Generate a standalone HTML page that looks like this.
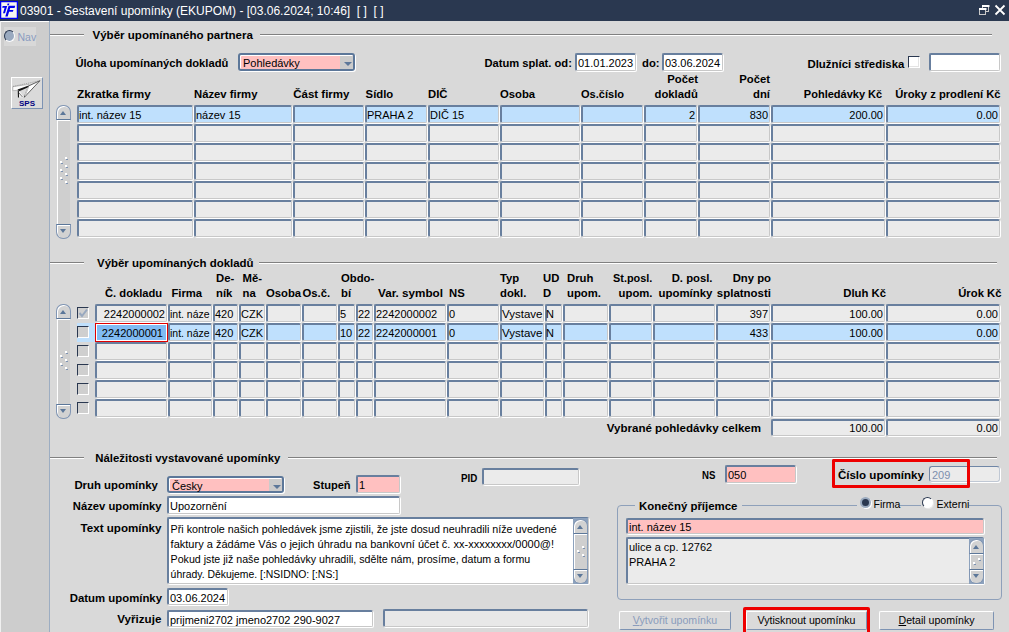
<!DOCTYPE html>
<html><head><meta charset="utf-8"><style>
html,body{margin:0;padding:0;width:1009px;height:632px;overflow:hidden;background:#d9d9d9}
body{position:relative;font-family:"Liberation Sans",sans-serif}
.t{position:absolute;line-height:1;white-space:nowrap;font-family:"Liberation Sans",sans-serif}
.b{position:absolute}
.f{position:absolute;box-sizing:border-box;border-style:solid;border-width:2px 2px 1px 2px;border-color:#5e7797 #ffffff #ffffff #5e7797;box-shadow:inset -1px -1px 0 #cfcfcf}
.sf{position:absolute;box-sizing:border-box;border-style:solid;border-width:2px 1px 1px 2px;border-color:#687f9e #c8c8c8 #c8c8c8 #687f9e;border-radius:2px;box-shadow:1px 1px 0 #ffffff}
svg.b{position:absolute}
</style></head><body>
<div class="b" style="left:0px;top:0px;width:1009px;height:21px;background:#2a3850"></div>
<svg class="b" style="left:0px;top:1px" width="18" height="18" viewBox="0 0 18 18">
<rect x="0.6" y="0.6" width="16.8" height="16.8" fill="#f7f7ee" stroke="#0000f0" stroke-width="1.3"/>
<path d="M7.6 2.6 h1.8 l-0.5 1.6 h-1.8 z" fill="#0000f0"/>
<path d="M2.6 5 h4.6 l-2.2 7.3 h-2 l1.6 -5.6 h-2.4 z" fill="#0000f0"/>
<path d="M8.6 4.8 h6.6 l-0.6 2.1 h-4.4 l-0.6 2 h3.8 l-0.5 1.8 h-3.8 l-1.4 4.7 h-2.4 z" fill="#0000f0"/>
</svg>
<div class="t" style="left:20px;top:5.00px;font-size:12px;color:#ffffff;">03901 - Sestavení upomínky (EKUPOM) - [03.06.2024; 10:46]&nbsp; [ ]&nbsp; [ ]</div>
<svg class="b" style="left:975px;top:2px" width="34" height="18" viewBox="975 2 34 18">
<rect x="982.5" y="5.5" width="6" height="6" fill="none" stroke="#c8c8c8" stroke-width="1"/>
<rect x="982" y="5" width="7.5" height="2" fill="#ffffff"/>
<rect x="979.5" y="8.5" width="6" height="6" fill="#2a3850" stroke="#c8c8c8" stroke-width="1"/>
<rect x="979" y="8" width="7.5" height="2" fill="#ffffff"/>
<path d="M995.5 5.5 L1004.5 14.5 M1004.5 5.5 L995.5 14.5" stroke="#ffffff" stroke-width="1.8"/>
</svg>
<div class="b" style="left:0px;top:21px;width:1009px;height:611px;background:#d9d9d9"></div>
<div class="b" style="left:0px;top:21px;width:49px;height:611px;background:#cdcdcd"></div>
<div class="b" style="left:0px;top:21px;width:49px;height:1px;background:#ffffff"></div>
<div class="b" style="left:0px;top:21px;width:1px;height:611px;background:#f0f0f0"></div>
<div class="b" style="left:49px;top:21px;width:1px;height:611px;background:#9cadc2"></div>
<div class="b" style="left:4px;top:27px;width:32px;height:19px;background:#d8d8d8"></div>
<div class="b" style="left:4px;top:30px;width:11px;height:12px;border-radius:50%;background:#9aaac0;box-sizing:border-box;border:1px solid;border-color:#2a3850 #ffffff #ffffff #2a3850"></div>
<div class="t" style="left:17.5px;top:32.00px;font-size:10.5px;color:#8a9cc0;">Nav</div>
<div class="b" style="left:11px;top:77px;width:32px;height:32px;box-sizing:border-box;border:1px solid;border-color:#ffffff #7d93b3 #7d93b3 #ffffff;background:#dadada"></div>
<svg class="b" style="left:0px;top:0px" width="50" height="120" viewBox="0 0 50 120">
<path d="M28.5 86 L39.9 80.7 L24.2 97.4 Z" fill="#ffffff" stroke="#3a3a3a" stroke-width="0.8"/>
<path d="M28 87.5 L25 95.5" fill="none" stroke="#c8c8c8" stroke-width="1.5"/>
<path d="M12.8 86.7 L29 84.3 L28.5 86 L19 90.2 L12.8 90.7 Z" fill="#fbfbfb" stroke="#8a8a8a" stroke-width="0.5"/>
<path d="M17.5 89.6 L28.8 85.4 L27.2 87.8 L19.2 91.2 Z" fill="#151515"/>
<path d="M18.2 90.6 L18.4 97.2 L24.2 97.4 L20.5 92.2 Z" fill="#f0f0f0"/>
<path d="M18.3 90.4 L18.5 97.4" stroke="#111" stroke-width="1.1"/>
<path d="M19 93 L22.5 97" stroke="#333" stroke-width="0.6"/>
<path d="M13 86.4 L39.5 80.8" stroke="#777" stroke-width="0.5" stroke-dasharray="1.3 0.9"/>
</svg>
<div class="t" style="left:-123px;width:300px;top:100.00px;font-size:8px;font-weight:bold;color:#000080;text-align:center;">SPS</div>
<div class="b" style="left:50px;top:34px;width:34px;height:1px;background:#808080"></div>
<div class="b" style="left:50px;top:35px;width:34px;height:1px;background:#ffffff"></div>
<div class="t" style="left:92.5px;top:30.00px;font-size:11.55px;font-weight:bold;color:#000;">Výběr upomínaného partnera</div>
<div class="b" style="left:260px;top:34px;width:732px;height:1px;background:#808080"></div>
<div class="b" style="left:260px;top:35px;width:732px;height:1px;background:#ffffff"></div>
<div class="t" style="left:75.4px;top:58.00px;font-size:11.19px;font-weight:bold;color:#000;">Úloha upomínaných dokladů</div>
<div class="b" style="left:238px;top:53px;width:117px;height:18px;box-sizing:border-box;border:2px solid #5c7799;border-radius:3px;background:#ffc0c0;box-shadow:inset 1px 1px 0 #ffffff, 1px 1px 0 #ffffff"></div>
<div class="b" style="left:340px;top:56px;width:13px;height:13px;background:#cbcbcb"></div>
<div class="b" style="left:344px;top:62px;width:0;height:0;border-left:4px solid transparent;border-right:4px solid transparent;border-top:4px solid #5c7799"></div>
<div class="t" style="left:243px;top:58.00px;font-size:11px;color:#000;">Pohledávky</div>
<div class="t" style="right:437.1148484375px;top:58.00px;font-size:11.18px;font-weight:bold;color:#000;text-align:right;">Datum splat. od:</div>
<div class="sf" style="left:575px;top:53px;width:61px;height:18px;background:#ffffff;"></div>
<div class="t" style="left:578px;top:58.00px;font-size:11px;color:#000;">01.01.2023</div>
<div class="t" style="left:642px;top:58.00px;font-size:11.3px;font-weight:bold;color:#000;">do:</div>
<div class="sf" style="left:662px;top:53px;width:61px;height:18px;background:#ffffff;"></div>
<div class="t" style="left:665px;top:58.00px;font-size:11px;color:#000;">03.06.2024</div>
<div class="t" style="right:104.67926562499997px;top:59.00px;font-size:11.4px;font-weight:bold;color:#000;text-align:right;">Dlužníci střediska</div>
<div class="b" style="left:908px;top:56px;width:12px;height:12px;box-sizing:border-box;border:1px solid;border-color:#2a3850 #ffffff #ffffff #2a3850;background:#ffffff;box-shadow:inset -1px -1px 0 #e4e4e4"></div>
<div class="sf" style="left:929px;top:53px;width:71px;height:18px;background:#ffffff;"></div>
<div class="t" style="left:77.0px;top:88.00px;font-size:11.75px;font-weight:bold;color:#000;">Zkratka firmy</div>
<div class="t" style="left:194px;top:89.00px;font-size:11.3px;font-weight:bold;color:#000;">Název firmy</div>
<div class="t" style="left:293.2px;top:89.00px;font-size:11.51px;font-weight:bold;color:#000;">Část firmy</div>
<div class="t" style="left:365.6px;top:89.00px;font-size:11.3px;font-weight:bold;color:#000;">Sídlo</div>
<div class="t" style="left:428px;top:89.00px;font-size:11.3px;font-weight:bold;color:#000;">DIČ</div>
<div class="t" style="left:500px;top:89.00px;font-size:11.3px;font-weight:bold;color:#000;">Osoba</div>
<div class="t" style="left:581.0px;top:89.00px;font-size:11.05px;font-weight:bold;color:#000;">Os.číslo</div>
<div class="t" style="right:311px;top:74.00px;font-size:11.3px;font-weight:bold;color:#000;text-align:right;">Počet</div>
<div class="t" style="right:311.21587656250006px;top:89.00px;font-size:11.29px;font-weight:bold;color:#000;text-align:right;">dokladů</div>
<div class="t" style="right:239px;top:74.00px;font-size:11.3px;font-weight:bold;color:#000;text-align:right;">Počet</div>
<div class="t" style="right:239px;top:89.00px;font-size:11.3px;font-weight:bold;color:#000;text-align:right;">dní</div>
<div class="t" style="right:126.80603203124997px;top:89.00px;font-size:11.03px;font-weight:bold;color:#000;text-align:right;">Pohledávky Kč</div>
<div class="t" style="right:8.392110937499979px;top:89.00px;font-size:11.22px;font-weight:bold;color:#000;text-align:right;">Úroky z prodlení Kč</div>
<div class="sf" style="left:77px;top:105px;width:116px;height:18px;background:#bfe0fd;"></div>
<div class="t" style="left:79px;top:110.00px;font-size:11px;color:#000;width:113px;clip-path:inset(-6px 0 -6px -6px);">int. název 15</div>
<div class="sf" style="left:194px;top:105px;width:98px;height:18px;background:#bfe0fd;"></div>
<div class="t" style="left:196px;top:110.00px;font-size:11px;color:#000;width:95px;clip-path:inset(-6px 0 -6px -6px);">název 15</div>
<div class="sf" style="left:293px;top:105px;width:71px;height:18px;background:#bfe0fd;"></div>
<div class="sf" style="left:365px;top:105px;width:62px;height:18px;background:#bfe0fd;"></div>
<div class="t" style="left:367px;top:110.00px;font-size:11px;color:#000;width:59px;clip-path:inset(-6px 0 -6px -6px);">PRAHA 2</div>
<div class="sf" style="left:428px;top:105px;width:71px;height:18px;background:#bfe0fd;"></div>
<div class="t" style="left:430px;top:110.00px;font-size:11px;color:#000;width:68px;clip-path:inset(-6px 0 -6px -6px);">DIČ 15</div>
<div class="sf" style="left:500px;top:105px;width:80px;height:18px;background:#bfe0fd;"></div>
<div class="sf" style="left:581px;top:105px;width:62px;height:18px;background:#bfe0fd;"></div>
<div class="sf" style="left:644px;top:105px;width:53px;height:18px;background:#bfe0fd;"></div>
<div class="t" style="right:314px;top:110.00px;font-size:11px;color:#000;text-align:right;">2</div>
<div class="sf" style="left:698px;top:105px;width:72px;height:18px;background:#bfe0fd;"></div>
<div class="t" style="right:241px;top:110.00px;font-size:11px;color:#000;text-align:right;">830</div>
<div class="sf" style="left:771px;top:105px;width:114px;height:18px;background:#bfe0fd;"></div>
<div class="t" style="right:126px;top:110.00px;font-size:11px;color:#000;text-align:right;">200.00</div>
<div class="sf" style="left:886px;top:105px;width:114px;height:18px;background:#bfe0fd;"></div>
<div class="t" style="right:11px;top:110.00px;font-size:11px;color:#000;text-align:right;">0.00</div>
<div class="sf" style="left:77px;top:124px;width:116px;height:18px;background:#ebebeb;"></div>
<div class="sf" style="left:194px;top:124px;width:98px;height:18px;background:#ebebeb;"></div>
<div class="sf" style="left:293px;top:124px;width:71px;height:18px;background:#ebebeb;"></div>
<div class="sf" style="left:365px;top:124px;width:62px;height:18px;background:#ebebeb;"></div>
<div class="sf" style="left:428px;top:124px;width:71px;height:18px;background:#ebebeb;"></div>
<div class="sf" style="left:500px;top:124px;width:80px;height:18px;background:#ebebeb;"></div>
<div class="sf" style="left:581px;top:124px;width:62px;height:18px;background:#ebebeb;"></div>
<div class="sf" style="left:644px;top:124px;width:53px;height:18px;background:#ebebeb;"></div>
<div class="sf" style="left:698px;top:124px;width:72px;height:18px;background:#ebebeb;"></div>
<div class="sf" style="left:771px;top:124px;width:114px;height:18px;background:#ebebeb;"></div>
<div class="sf" style="left:886px;top:124px;width:114px;height:18px;background:#ebebeb;"></div>
<div class="sf" style="left:77px;top:143px;width:116px;height:18px;background:#ebebeb;"></div>
<div class="sf" style="left:194px;top:143px;width:98px;height:18px;background:#ebebeb;"></div>
<div class="sf" style="left:293px;top:143px;width:71px;height:18px;background:#ebebeb;"></div>
<div class="sf" style="left:365px;top:143px;width:62px;height:18px;background:#ebebeb;"></div>
<div class="sf" style="left:428px;top:143px;width:71px;height:18px;background:#ebebeb;"></div>
<div class="sf" style="left:500px;top:143px;width:80px;height:18px;background:#ebebeb;"></div>
<div class="sf" style="left:581px;top:143px;width:62px;height:18px;background:#ebebeb;"></div>
<div class="sf" style="left:644px;top:143px;width:53px;height:18px;background:#ebebeb;"></div>
<div class="sf" style="left:698px;top:143px;width:72px;height:18px;background:#ebebeb;"></div>
<div class="sf" style="left:771px;top:143px;width:114px;height:18px;background:#ebebeb;"></div>
<div class="sf" style="left:886px;top:143px;width:114px;height:18px;background:#ebebeb;"></div>
<div class="sf" style="left:77px;top:162px;width:116px;height:18px;background:#ebebeb;"></div>
<div class="sf" style="left:194px;top:162px;width:98px;height:18px;background:#ebebeb;"></div>
<div class="sf" style="left:293px;top:162px;width:71px;height:18px;background:#ebebeb;"></div>
<div class="sf" style="left:365px;top:162px;width:62px;height:18px;background:#ebebeb;"></div>
<div class="sf" style="left:428px;top:162px;width:71px;height:18px;background:#ebebeb;"></div>
<div class="sf" style="left:500px;top:162px;width:80px;height:18px;background:#ebebeb;"></div>
<div class="sf" style="left:581px;top:162px;width:62px;height:18px;background:#ebebeb;"></div>
<div class="sf" style="left:644px;top:162px;width:53px;height:18px;background:#ebebeb;"></div>
<div class="sf" style="left:698px;top:162px;width:72px;height:18px;background:#ebebeb;"></div>
<div class="sf" style="left:771px;top:162px;width:114px;height:18px;background:#ebebeb;"></div>
<div class="sf" style="left:886px;top:162px;width:114px;height:18px;background:#ebebeb;"></div>
<div class="sf" style="left:77px;top:181px;width:116px;height:18px;background:#ebebeb;"></div>
<div class="sf" style="left:194px;top:181px;width:98px;height:18px;background:#ebebeb;"></div>
<div class="sf" style="left:293px;top:181px;width:71px;height:18px;background:#ebebeb;"></div>
<div class="sf" style="left:365px;top:181px;width:62px;height:18px;background:#ebebeb;"></div>
<div class="sf" style="left:428px;top:181px;width:71px;height:18px;background:#ebebeb;"></div>
<div class="sf" style="left:500px;top:181px;width:80px;height:18px;background:#ebebeb;"></div>
<div class="sf" style="left:581px;top:181px;width:62px;height:18px;background:#ebebeb;"></div>
<div class="sf" style="left:644px;top:181px;width:53px;height:18px;background:#ebebeb;"></div>
<div class="sf" style="left:698px;top:181px;width:72px;height:18px;background:#ebebeb;"></div>
<div class="sf" style="left:771px;top:181px;width:114px;height:18px;background:#ebebeb;"></div>
<div class="sf" style="left:886px;top:181px;width:114px;height:18px;background:#ebebeb;"></div>
<div class="sf" style="left:77px;top:200px;width:116px;height:18px;background:#ebebeb;"></div>
<div class="sf" style="left:194px;top:200px;width:98px;height:18px;background:#ebebeb;"></div>
<div class="sf" style="left:293px;top:200px;width:71px;height:18px;background:#ebebeb;"></div>
<div class="sf" style="left:365px;top:200px;width:62px;height:18px;background:#ebebeb;"></div>
<div class="sf" style="left:428px;top:200px;width:71px;height:18px;background:#ebebeb;"></div>
<div class="sf" style="left:500px;top:200px;width:80px;height:18px;background:#ebebeb;"></div>
<div class="sf" style="left:581px;top:200px;width:62px;height:18px;background:#ebebeb;"></div>
<div class="sf" style="left:644px;top:200px;width:53px;height:18px;background:#ebebeb;"></div>
<div class="sf" style="left:698px;top:200px;width:72px;height:18px;background:#ebebeb;"></div>
<div class="sf" style="left:771px;top:200px;width:114px;height:18px;background:#ebebeb;"></div>
<div class="sf" style="left:886px;top:200px;width:114px;height:18px;background:#ebebeb;"></div>
<div class="sf" style="left:77px;top:219px;width:116px;height:18px;background:#ebebeb;"></div>
<div class="sf" style="left:194px;top:219px;width:98px;height:18px;background:#ebebeb;"></div>
<div class="sf" style="left:293px;top:219px;width:71px;height:18px;background:#ebebeb;"></div>
<div class="sf" style="left:365px;top:219px;width:62px;height:18px;background:#ebebeb;"></div>
<div class="sf" style="left:428px;top:219px;width:71px;height:18px;background:#ebebeb;"></div>
<div class="sf" style="left:500px;top:219px;width:80px;height:18px;background:#ebebeb;"></div>
<div class="sf" style="left:581px;top:219px;width:62px;height:18px;background:#ebebeb;"></div>
<div class="sf" style="left:644px;top:219px;width:53px;height:18px;background:#ebebeb;"></div>
<div class="sf" style="left:698px;top:219px;width:72px;height:18px;background:#ebebeb;"></div>
<div class="sf" style="left:771px;top:219px;width:114px;height:18px;background:#ebebeb;"></div>
<div class="sf" style="left:886px;top:219px;width:114px;height:18px;background:#ebebeb;"></div>
<div class="b" style="left:57px;top:113px;width:13px;height:118px;background:#cfcfcf;box-sizing:border-box;border-left:1px solid #ffffff"></div>
<div class="b" style="left:56px;top:105px;width:15px;height:15px;box-sizing:border-box;border:1px solid #8196b4;border-bottom-color:#5c7799;border-radius:7px 7px 0 0;background:#d2d2d2;box-shadow:inset 1px 1px 0 #fff"></div>
<div class="b" style="left:57px;top:120px;width:13px;height:1px;background:#ffffff"></div>
<div class="b" style="left:60px;top:111px;width:0;height:0;border-left:3.5px solid transparent;border-right:3.5px solid transparent;border-bottom:4px solid #5c7799"></div>
<div class="b" style="left:56px;top:224px;width:15px;height:15px;box-sizing:border-box;border:1px solid #8196b4;border-top-color:#5c7799;border-radius:0 0 7px 7px;background:#d2d2d2;box-shadow:inset 1px 1px 0 #fff"></div>
<div class="b" style="left:60px;top:229px;width:0;height:0;border-left:3.5px solid transparent;border-right:3.5px solid transparent;border-top:4px solid #5c7799"></div>
<div class="b" style="left:65px;top:157px;width:2px;height:2px;background:#ffffff"></div>
<div class="b" style="left:66px;top:159px;width:2px;height:1px;background:#7d93b3"></div>
<div class="b" style="left:60px;top:161px;width:2px;height:2px;background:#ffffff"></div>
<div class="b" style="left:61px;top:163px;width:2px;height:1px;background:#7d93b3"></div>
<div class="b" style="left:65px;top:165px;width:2px;height:2px;background:#ffffff"></div>
<div class="b" style="left:66px;top:167px;width:2px;height:1px;background:#7d93b3"></div>
<div class="b" style="left:60px;top:169px;width:2px;height:2px;background:#ffffff"></div>
<div class="b" style="left:61px;top:171px;width:2px;height:1px;background:#7d93b3"></div>
<div class="b" style="left:65px;top:173px;width:2px;height:2px;background:#ffffff"></div>
<div class="b" style="left:66px;top:175px;width:2px;height:1px;background:#7d93b3"></div>
<div class="b" style="left:60px;top:177px;width:2px;height:2px;background:#ffffff"></div>
<div class="b" style="left:61px;top:179px;width:2px;height:1px;background:#7d93b3"></div>
<div class="b" style="left:65px;top:181px;width:2px;height:2px;background:#ffffff"></div>
<div class="b" style="left:66px;top:183px;width:2px;height:1px;background:#7d93b3"></div>
<div class="b" style="left:50px;top:262px;width:34px;height:1px;background:#808080"></div>
<div class="b" style="left:50px;top:263px;width:34px;height:1px;background:#ffffff"></div>
<div class="t" style="left:97.0px;top:258.00px;font-size:11.46px;font-weight:bold;color:#000;">Výběr upomínaných dokladů</div>
<div class="b" style="left:259px;top:262px;width:738px;height:1px;background:#808080"></div>
<div class="b" style="left:259px;top:263px;width:738px;height:1px;background:#ffffff"></div>
<div class="t" style="left:105.0px;top:288.00px;font-size:11.19px;font-weight:bold;color:#000;">Č. dokladu</div>
<div class="t" style="left:171.4px;top:288.00px;font-size:11.3px;font-weight:bold;color:#000;">Firma</div>
<div class="t" style="left:216px;top:273.00px;font-size:11.3px;font-weight:bold;color:#000;">De-</div>
<div class="t" style="left:216px;top:288.00px;font-size:11.3px;font-weight:bold;color:#000;">ník</div>
<div class="t" style="left:242.5px;top:273.00px;font-size:11.3px;font-weight:bold;color:#000;">Mě-</div>
<div class="t" style="left:242.5px;top:288.00px;font-size:11.3px;font-weight:bold;color:#000;">na</div>
<div class="t" style="left:266px;top:288.00px;font-size:11.3px;font-weight:bold;color:#000;">Osoba</div>
<div class="t" style="left:302.5px;top:288.00px;font-size:11.3px;font-weight:bold;color:#000;">Os.č.</div>
<div class="t" style="left:341px;top:273.00px;font-size:11.3px;font-weight:bold;color:#000;">Obdo-</div>
<div class="t" style="left:341px;top:288.00px;font-size:11.3px;font-weight:bold;color:#000;">bí</div>
<div class="t" style="left:378.0px;top:287.00px;font-size:11.69px;font-weight:bold;color:#000;">Var. symbol</div>
<div class="t" style="left:449px;top:288.00px;font-size:11.3px;font-weight:bold;color:#000;">NS</div>
<div class="t" style="left:500px;top:273.00px;font-size:11.3px;font-weight:bold;color:#000;">Typ</div>
<div class="t" style="left:500px;top:288.00px;font-size:11.3px;font-weight:bold;color:#000;">dokl.</div>
<div class="t" style="left:543px;top:273.00px;font-size:11.3px;font-weight:bold;color:#000;">UD</div>
<div class="t" style="left:543px;top:288.00px;font-size:11.3px;font-weight:bold;color:#000;">D</div>
<div class="t" style="left:567px;top:273.00px;font-size:11.3px;font-weight:bold;color:#000;">Druh</div>
<div class="t" style="left:567px;top:288.00px;font-size:11.3px;font-weight:bold;color:#000;">upom.</div>
<div class="t" style="right:356.68468593750003px;top:273.00px;font-size:10.89px;font-weight:bold;color:#000;text-align:right;">St.posl.</div>
<div class="t" style="right:356.5px;top:288.00px;font-size:11.3px;font-weight:bold;color:#000;text-align:right;">upom.</div>
<div class="t" style="right:296.5px;top:273.00px;font-size:11.3px;font-weight:bold;color:#000;text-align:right;">D. posl.</div>
<div class="t" style="right:296.52589609375px;top:288.00px;font-size:11.43px;font-weight:bold;color:#000;text-align:right;">upomínky</div>
<div class="t" style="right:238px;top:273.00px;font-size:11.3px;font-weight:bold;color:#000;text-align:right;">Dny po</div>
<div class="t" style="right:238.02509062499996px;top:288.00px;font-size:11.47px;font-weight:bold;color:#000;text-align:right;">splatnosti</div>
<div class="t" style="right:123px;top:288.00px;font-size:11.3px;font-weight:bold;color:#000;text-align:right;">Dluh Kč</div>
<div class="t" style="right:7.5px;top:288.00px;font-size:11.3px;font-weight:bold;color:#000;text-align:right;">Úrok Kč</div>
<div class="b" style="left:77px;top:323px;width:18px;height:19px;background:#bfe0fd"></div>
<div class="b" style="left:77px;top:307px;width:12px;height:12px;box-sizing:border-box;border:1px solid;border-color:#2a3850 #fff #fff #2a3850;background:#cfcfcf"></div>
<div class="sf" style="left:95px;top:304px;width:72px;height:18px;background:#ebebeb;"></div>
<div class="t" style="right:844px;top:309.00px;font-size:11px;color:#000;text-align:right;">2242000002</div>
<div class="sf" style="left:168px;top:304px;width:44px;height:18px;background:#ebebeb;"></div>
<div class="t" style="left:170px;top:310.00px;font-size:10.48px;color:#000;width:41px;clip-path:inset(-6px 0 -6px -6px);">int. náze</div>
<div class="sf" style="left:213px;top:304px;width:25px;height:18px;background:#ebebeb;"></div>
<div class="t" style="left:215px;top:309.00px;font-size:11px;color:#000;width:22px;clip-path:inset(-6px 0 -6px -6px);">420</div>
<div class="sf" style="left:239px;top:304px;width:26px;height:18px;background:#ebebeb;"></div>
<div class="t" style="left:241px;top:309.00px;font-size:11px;color:#000;width:23px;clip-path:inset(-6px 0 -6px -6px);">CZK</div>
<div class="sf" style="left:266px;top:304px;width:35px;height:18px;background:#ebebeb;"></div>
<div class="sf" style="left:302px;top:304px;width:35px;height:18px;background:#ebebeb;"></div>
<div class="sf" style="left:338px;top:304px;width:17px;height:18px;background:#ebebeb;"></div>
<div class="t" style="left:340px;top:309.00px;font-size:11px;color:#000;width:14px;clip-path:inset(-6px 0 -6px -6px);">5</div>
<div class="sf" style="left:356px;top:304px;width:17px;height:18px;background:#ebebeb;"></div>
<div class="t" style="left:358px;top:309.00px;font-size:11px;color:#000;width:14px;clip-path:inset(-6px 0 -6px -6px);">22</div>
<div class="sf" style="left:374px;top:304px;width:72px;height:18px;background:#ebebeb;"></div>
<div class="t" style="left:376px;top:309.00px;font-size:11px;color:#000;width:69px;clip-path:inset(-6px 0 -6px -6px);">2242000002</div>
<div class="sf" style="left:447px;top:304px;width:52px;height:18px;background:#ebebeb;"></div>
<div class="t" style="left:449px;top:309.00px;font-size:11px;color:#000;width:49px;clip-path:inset(-6px 0 -6px -6px);">0</div>
<div class="sf" style="left:500px;top:304px;width:44px;height:18px;background:#ebebeb;"></div>
<div class="t" style="left:502px;top:309.00px;font-size:11.51px;color:#000;width:41px;clip-path:inset(-6px 0 -6px -6px);">Vystave</div>
<div class="sf" style="left:545px;top:304px;width:17px;height:18px;background:#ebebeb;"></div>
<div class="t" style="left:546px;top:309.00px;font-size:11px;color:#000;width:15px;clip-path:inset(-6px 0 -6px -6px);">N</div>
<div class="sf" style="left:563px;top:304px;width:45px;height:18px;background:#ebebeb;"></div>
<div class="sf" style="left:609px;top:304px;width:43px;height:18px;background:#ebebeb;"></div>
<div class="sf" style="left:653px;top:304px;width:62px;height:18px;background:#ebebeb;"></div>
<div class="sf" style="left:716px;top:304px;width:54px;height:18px;background:#ebebeb;"></div>
<div class="t" style="right:241px;top:309.00px;font-size:11px;color:#000;text-align:right;">397</div>
<div class="sf" style="left:771px;top:304px;width:114px;height:18px;background:#ebebeb;"></div>
<div class="t" style="right:126px;top:309.00px;font-size:11px;color:#000;text-align:right;">100.00</div>
<div class="sf" style="left:886px;top:304px;width:114px;height:18px;background:#ebebeb;"></div>
<div class="t" style="right:11px;top:309.00px;font-size:11px;color:#000;text-align:right;">0.00</div>
<div class="b" style="left:77px;top:326px;width:12px;height:12px;box-sizing:border-box;border:1px solid;border-color:#2a3850 #fff #fff #2a3850;background:#cfcfcf"></div>
<div class="sf" style="left:95px;top:323px;width:72px;height:18px;background:#bfe0fd;"></div>
<div class="t" style="right:844px;top:328.00px;font-size:11px;color:#000;text-align:right;">2242000001</div>
<div class="sf" style="left:168px;top:323px;width:44px;height:18px;background:#bfe0fd;"></div>
<div class="t" style="left:170px;top:329.00px;font-size:10.48px;color:#000;width:41px;clip-path:inset(-6px 0 -6px -6px);">int. náze</div>
<div class="sf" style="left:213px;top:323px;width:25px;height:18px;background:#bfe0fd;"></div>
<div class="t" style="left:215px;top:328.00px;font-size:11px;color:#000;width:22px;clip-path:inset(-6px 0 -6px -6px);">420</div>
<div class="sf" style="left:239px;top:323px;width:26px;height:18px;background:#bfe0fd;"></div>
<div class="t" style="left:241px;top:328.00px;font-size:11px;color:#000;width:23px;clip-path:inset(-6px 0 -6px -6px);">CZK</div>
<div class="sf" style="left:266px;top:323px;width:35px;height:18px;background:#bfe0fd;"></div>
<div class="sf" style="left:302px;top:323px;width:35px;height:18px;background:#bfe0fd;"></div>
<div class="sf" style="left:338px;top:323px;width:17px;height:18px;background:#bfe0fd;"></div>
<div class="t" style="left:340px;top:328.00px;font-size:11px;color:#000;width:14px;clip-path:inset(-6px 0 -6px -6px);">10</div>
<div class="sf" style="left:356px;top:323px;width:17px;height:18px;background:#bfe0fd;"></div>
<div class="t" style="left:358px;top:328.00px;font-size:11px;color:#000;width:14px;clip-path:inset(-6px 0 -6px -6px);">22</div>
<div class="sf" style="left:374px;top:323px;width:72px;height:18px;background:#bfe0fd;"></div>
<div class="t" style="left:376px;top:328.00px;font-size:11px;color:#000;width:69px;clip-path:inset(-6px 0 -6px -6px);">2242000001</div>
<div class="sf" style="left:447px;top:323px;width:52px;height:18px;background:#bfe0fd;"></div>
<div class="t" style="left:449px;top:328.00px;font-size:11px;color:#000;width:49px;clip-path:inset(-6px 0 -6px -6px);">0</div>
<div class="sf" style="left:500px;top:323px;width:44px;height:18px;background:#bfe0fd;"></div>
<div class="t" style="left:502px;top:328.00px;font-size:11.51px;color:#000;width:41px;clip-path:inset(-6px 0 -6px -6px);">Vystave</div>
<div class="sf" style="left:545px;top:323px;width:17px;height:18px;background:#bfe0fd;"></div>
<div class="t" style="left:546px;top:328.00px;font-size:11px;color:#000;width:15px;clip-path:inset(-6px 0 -6px -6px);">N</div>
<div class="sf" style="left:563px;top:323px;width:45px;height:18px;background:#bfe0fd;"></div>
<div class="sf" style="left:609px;top:323px;width:43px;height:18px;background:#bfe0fd;"></div>
<div class="sf" style="left:653px;top:323px;width:62px;height:18px;background:#bfe0fd;"></div>
<div class="sf" style="left:716px;top:323px;width:54px;height:18px;background:#bfe0fd;"></div>
<div class="t" style="right:241px;top:328.00px;font-size:11px;color:#000;text-align:right;">433</div>
<div class="sf" style="left:771px;top:323px;width:114px;height:18px;background:#bfe0fd;"></div>
<div class="t" style="right:126px;top:328.00px;font-size:11px;color:#000;text-align:right;">100.00</div>
<div class="sf" style="left:886px;top:323px;width:114px;height:18px;background:#bfe0fd;"></div>
<div class="t" style="right:11px;top:328.00px;font-size:11px;color:#000;text-align:right;">0.00</div>
<div class="b" style="left:77px;top:345px;width:12px;height:12px;box-sizing:border-box;border:1px solid;border-color:#2a3850 #fff #fff #2a3850;background:#cfcfcf"></div>
<div class="sf" style="left:95px;top:342px;width:72px;height:18px;background:#ebebeb;"></div>
<div class="sf" style="left:168px;top:342px;width:44px;height:18px;background:#ebebeb;"></div>
<div class="sf" style="left:213px;top:342px;width:25px;height:18px;background:#ebebeb;"></div>
<div class="sf" style="left:239px;top:342px;width:26px;height:18px;background:#ebebeb;"></div>
<div class="sf" style="left:266px;top:342px;width:35px;height:18px;background:#ebebeb;"></div>
<div class="sf" style="left:302px;top:342px;width:35px;height:18px;background:#ebebeb;"></div>
<div class="sf" style="left:338px;top:342px;width:17px;height:18px;background:#ebebeb;"></div>
<div class="sf" style="left:356px;top:342px;width:17px;height:18px;background:#ebebeb;"></div>
<div class="sf" style="left:374px;top:342px;width:72px;height:18px;background:#ebebeb;"></div>
<div class="sf" style="left:447px;top:342px;width:52px;height:18px;background:#ebebeb;"></div>
<div class="sf" style="left:500px;top:342px;width:44px;height:18px;background:#ebebeb;"></div>
<div class="sf" style="left:545px;top:342px;width:17px;height:18px;background:#ebebeb;"></div>
<div class="sf" style="left:563px;top:342px;width:45px;height:18px;background:#ebebeb;"></div>
<div class="sf" style="left:609px;top:342px;width:43px;height:18px;background:#ebebeb;"></div>
<div class="sf" style="left:653px;top:342px;width:62px;height:18px;background:#ebebeb;"></div>
<div class="sf" style="left:716px;top:342px;width:54px;height:18px;background:#ebebeb;"></div>
<div class="sf" style="left:771px;top:342px;width:114px;height:18px;background:#ebebeb;"></div>
<div class="sf" style="left:886px;top:342px;width:114px;height:18px;background:#ebebeb;"></div>
<div class="b" style="left:77px;top:364px;width:12px;height:12px;box-sizing:border-box;border:1px solid;border-color:#2a3850 #fff #fff #2a3850;background:#cfcfcf"></div>
<div class="sf" style="left:95px;top:361px;width:72px;height:18px;background:#ebebeb;"></div>
<div class="sf" style="left:168px;top:361px;width:44px;height:18px;background:#ebebeb;"></div>
<div class="sf" style="left:213px;top:361px;width:25px;height:18px;background:#ebebeb;"></div>
<div class="sf" style="left:239px;top:361px;width:26px;height:18px;background:#ebebeb;"></div>
<div class="sf" style="left:266px;top:361px;width:35px;height:18px;background:#ebebeb;"></div>
<div class="sf" style="left:302px;top:361px;width:35px;height:18px;background:#ebebeb;"></div>
<div class="sf" style="left:338px;top:361px;width:17px;height:18px;background:#ebebeb;"></div>
<div class="sf" style="left:356px;top:361px;width:17px;height:18px;background:#ebebeb;"></div>
<div class="sf" style="left:374px;top:361px;width:72px;height:18px;background:#ebebeb;"></div>
<div class="sf" style="left:447px;top:361px;width:52px;height:18px;background:#ebebeb;"></div>
<div class="sf" style="left:500px;top:361px;width:44px;height:18px;background:#ebebeb;"></div>
<div class="sf" style="left:545px;top:361px;width:17px;height:18px;background:#ebebeb;"></div>
<div class="sf" style="left:563px;top:361px;width:45px;height:18px;background:#ebebeb;"></div>
<div class="sf" style="left:609px;top:361px;width:43px;height:18px;background:#ebebeb;"></div>
<div class="sf" style="left:653px;top:361px;width:62px;height:18px;background:#ebebeb;"></div>
<div class="sf" style="left:716px;top:361px;width:54px;height:18px;background:#ebebeb;"></div>
<div class="sf" style="left:771px;top:361px;width:114px;height:18px;background:#ebebeb;"></div>
<div class="sf" style="left:886px;top:361px;width:114px;height:18px;background:#ebebeb;"></div>
<div class="b" style="left:77px;top:383px;width:12px;height:12px;box-sizing:border-box;border:1px solid;border-color:#2a3850 #fff #fff #2a3850;background:#cfcfcf"></div>
<div class="sf" style="left:95px;top:380px;width:72px;height:18px;background:#ebebeb;"></div>
<div class="sf" style="left:168px;top:380px;width:44px;height:18px;background:#ebebeb;"></div>
<div class="sf" style="left:213px;top:380px;width:25px;height:18px;background:#ebebeb;"></div>
<div class="sf" style="left:239px;top:380px;width:26px;height:18px;background:#ebebeb;"></div>
<div class="sf" style="left:266px;top:380px;width:35px;height:18px;background:#ebebeb;"></div>
<div class="sf" style="left:302px;top:380px;width:35px;height:18px;background:#ebebeb;"></div>
<div class="sf" style="left:338px;top:380px;width:17px;height:18px;background:#ebebeb;"></div>
<div class="sf" style="left:356px;top:380px;width:17px;height:18px;background:#ebebeb;"></div>
<div class="sf" style="left:374px;top:380px;width:72px;height:18px;background:#ebebeb;"></div>
<div class="sf" style="left:447px;top:380px;width:52px;height:18px;background:#ebebeb;"></div>
<div class="sf" style="left:500px;top:380px;width:44px;height:18px;background:#ebebeb;"></div>
<div class="sf" style="left:545px;top:380px;width:17px;height:18px;background:#ebebeb;"></div>
<div class="sf" style="left:563px;top:380px;width:45px;height:18px;background:#ebebeb;"></div>
<div class="sf" style="left:609px;top:380px;width:43px;height:18px;background:#ebebeb;"></div>
<div class="sf" style="left:653px;top:380px;width:62px;height:18px;background:#ebebeb;"></div>
<div class="sf" style="left:716px;top:380px;width:54px;height:18px;background:#ebebeb;"></div>
<div class="sf" style="left:771px;top:380px;width:114px;height:18px;background:#ebebeb;"></div>
<div class="sf" style="left:886px;top:380px;width:114px;height:18px;background:#ebebeb;"></div>
<div class="b" style="left:77px;top:402px;width:12px;height:12px;box-sizing:border-box;border:1px solid;border-color:#2a3850 #fff #fff #2a3850;background:#cfcfcf"></div>
<div class="sf" style="left:95px;top:399px;width:72px;height:18px;background:#ebebeb;"></div>
<div class="sf" style="left:168px;top:399px;width:44px;height:18px;background:#ebebeb;"></div>
<div class="sf" style="left:213px;top:399px;width:25px;height:18px;background:#ebebeb;"></div>
<div class="sf" style="left:239px;top:399px;width:26px;height:18px;background:#ebebeb;"></div>
<div class="sf" style="left:266px;top:399px;width:35px;height:18px;background:#ebebeb;"></div>
<div class="sf" style="left:302px;top:399px;width:35px;height:18px;background:#ebebeb;"></div>
<div class="sf" style="left:338px;top:399px;width:17px;height:18px;background:#ebebeb;"></div>
<div class="sf" style="left:356px;top:399px;width:17px;height:18px;background:#ebebeb;"></div>
<div class="sf" style="left:374px;top:399px;width:72px;height:18px;background:#ebebeb;"></div>
<div class="sf" style="left:447px;top:399px;width:52px;height:18px;background:#ebebeb;"></div>
<div class="sf" style="left:500px;top:399px;width:44px;height:18px;background:#ebebeb;"></div>
<div class="sf" style="left:545px;top:399px;width:17px;height:18px;background:#ebebeb;"></div>
<div class="sf" style="left:563px;top:399px;width:45px;height:18px;background:#ebebeb;"></div>
<div class="sf" style="left:609px;top:399px;width:43px;height:18px;background:#ebebeb;"></div>
<div class="sf" style="left:653px;top:399px;width:62px;height:18px;background:#ebebeb;"></div>
<div class="sf" style="left:716px;top:399px;width:54px;height:18px;background:#ebebeb;"></div>
<div class="sf" style="left:771px;top:399px;width:114px;height:18px;background:#ebebeb;"></div>
<div class="sf" style="left:886px;top:399px;width:114px;height:18px;background:#ebebeb;"></div>
<svg class="b" style="left:78px;top:308px" width="10" height="10" viewBox="0 0 10 10"><path d="M1.5 5 L4 8 L9 1.5" fill="none" stroke="#98a8bf" stroke-width="2"/></svg>
<div class="b" style="left:95px;top:323px;width:73px;height:19px;box-sizing:border-box;border:1px solid #e00000;background:#80bbf3;box-shadow:inset 0 0 0 1px #ffffff"></div>
<div class="t" style="right:846px;top:328.00px;font-size:11px;color:#000;text-align:right;">2242000001</div>
<div class="b" style="left:57px;top:312px;width:13px;height:99px;background:#cfcfcf;box-sizing:border-box;border-left:1px solid #ffffff"></div>
<div class="b" style="left:56px;top:304px;width:15px;height:15px;box-sizing:border-box;border:1px solid #8196b4;border-bottom-color:#5c7799;border-radius:7px 7px 0 0;background:#d2d2d2;box-shadow:inset 1px 1px 0 #fff"></div>
<div class="b" style="left:57px;top:319px;width:13px;height:1px;background:#ffffff"></div>
<div class="b" style="left:60px;top:310px;width:0;height:0;border-left:3.5px solid transparent;border-right:3.5px solid transparent;border-bottom:4px solid #5c7799"></div>
<div class="b" style="left:56px;top:404px;width:15px;height:15px;box-sizing:border-box;border:1px solid #8196b4;border-top-color:#5c7799;border-radius:0 0 7px 7px;background:#d2d2d2;box-shadow:inset 1px 1px 0 #fff"></div>
<div class="b" style="left:60px;top:409px;width:0;height:0;border-left:3.5px solid transparent;border-right:3.5px solid transparent;border-top:4px solid #5c7799"></div>
<div class="b" style="left:65px;top:351px;width:2px;height:2px;background:#ffffff"></div>
<div class="b" style="left:66px;top:353px;width:2px;height:1px;background:#7d93b3"></div>
<div class="b" style="left:60px;top:355px;width:2px;height:2px;background:#ffffff"></div>
<div class="b" style="left:61px;top:357px;width:2px;height:1px;background:#7d93b3"></div>
<div class="b" style="left:65px;top:359px;width:2px;height:2px;background:#ffffff"></div>
<div class="b" style="left:66px;top:361px;width:2px;height:1px;background:#7d93b3"></div>
<div class="b" style="left:60px;top:363px;width:2px;height:2px;background:#ffffff"></div>
<div class="b" style="left:61px;top:365px;width:2px;height:1px;background:#7d93b3"></div>
<div class="b" style="left:65px;top:367px;width:2px;height:2px;background:#ffffff"></div>
<div class="b" style="left:66px;top:369px;width:2px;height:1px;background:#7d93b3"></div>
<div class="t" style="right:248.01535312500005px;top:423.00px;font-size:11.56px;font-weight:bold;color:#000;text-align:right;">Vybrané pohledávky celkem</div>
<div class="sf" style="left:771px;top:419px;width:114px;height:17px;background:#ebebeb;"></div>
<div class="t" style="right:126px;top:423.00px;font-size:11px;color:#000;text-align:right;">100.00</div>
<div class="sf" style="left:886px;top:419px;width:114px;height:17px;background:#ebebeb;"></div>
<div class="t" style="right:11px;top:423.00px;font-size:11px;color:#000;text-align:right;">0.00</div>
<div class="b" style="left:50px;top:457px;width:34px;height:1px;background:#808080"></div>
<div class="b" style="left:50px;top:458px;width:34px;height:1px;background:#ffffff"></div>
<div class="t" style="left:95.3px;top:453.00px;font-size:11.36px;font-weight:bold;color:#000;">Náležitosti vystavované upomínky</div>
<div class="b" style="left:288px;top:457px;width:709px;height:1px;background:#808080"></div>
<div class="b" style="left:288px;top:458px;width:709px;height:1px;background:#ffffff"></div>
<div class="t" style="right:851.216003125px;top:480.00px;font-size:11.38px;font-weight:bold;color:#000;text-align:right;">Druh upomínky</div>
<div class="b" style="left:167px;top:476px;width:117px;height:17px;box-sizing:border-box;border:2px solid #5c7799;border-radius:3px;background:#ffc0c0;box-shadow:inset 1px 1px 0 #ffffff, 1px 1px 0 #ffffff"></div>
<div class="b" style="left:269px;top:479px;width:13px;height:12px;background:#cbcbcb"></div>
<div class="b" style="left:273px;top:485px;width:0;height:0;border-left:4px solid transparent;border-right:4px solid transparent;border-top:4px solid #5c7799"></div>
<div class="t" style="left:172px;top:481.00px;font-size:11px;color:#000;">Česky</div>
<div class="t" style="right:658.41299609375px;top:480.00px;font-size:11.09px;font-weight:bold;color:#000;text-align:right;">Stupeň</div>
<div class="sf" style="left:356px;top:475px;width:44px;height:18px;background:#ffc0c0;"></div>
<div class="t" style="left:359px;top:480.00px;font-size:11px;color:#000;">1</div>
<div class="t" style="left:460.8px;top:473.00px;font-size:11.3px;font-weight:bold;color:#000;transform:scaleX(0.866);transform-origin:0 0;">PID</div>
<div class="sf" style="left:482px;top:468px;width:97px;height:17px;background:#ebebeb;"></div>
<div class="t" style="left:702.3px;top:470.00px;font-size:11.3px;font-weight:bold;color:#000;transform:scaleX(0.853);transform-origin:0 0;">NS</div>
<div class="sf" style="left:725px;top:465px;width:71px;height:18px;background:#ffc0c0;"></div>
<div class="t" style="left:728px;top:470.00px;font-size:11px;color:#000;">050</div>
<div class="b" style="left:832px;top:459px;width:138px;height:29px;box-sizing:border-box;border:3px solid #ee0000;border-radius:2px"></div>
<div class="t" style="left:837.9px;top:470.00px;font-size:11.55px;font-weight:bold;color:#000;">Číslo upomínky</div>
<div class="sf" style="left:929px;top:466px;width:71px;height:16px;background:#ebebeb;border-width:1px;border-color:#6f86a6 #c0c8d4 #c0c8d4 #6f86a6;border-radius:3px"></div>
<div class="t" style="left:932px;top:470.00px;font-size:11px;color:#7d8fae;">209</div>
<div class="b" style="left:832px;top:459px;width:138px;height:29px;box-sizing:border-box;border:3px solid #ee0000;border-radius:2px"></div>
<div class="t" style="right:847.48595px;top:501.00px;font-size:11.24px;font-weight:bold;color:#000;text-align:right;">Název upomínky</div>
<div class="sf" style="left:167px;top:496px;width:233px;height:18px;background:#ffffff;"></div>
<div class="t" style="left:170px;top:501.00px;font-size:11px;color:#000;">Upozornění</div>
<div class="t" style="right:847.52809375px;top:522.00px;font-size:11.6px;font-weight:bold;color:#000;text-align:right;">Text upomínky</div>
<div class="sf" style="left:167px;top:517px;width:422px;height:67px;background:#ffffff;"></div>
<div class="t" style="left:170.6px;top:524.00px;font-size:10.72px;color:#000;">Při kontrole našich pohledávek jsme zjistili, že jste dosud neuhradili níže uvedené</div>
<div class="t" style="left:170.6px;top:539.00px;font-size:11.02px;color:#000;">faktury a žádáme Vás o jejich úhradu na bankovní účet č. xx-xxxxxxxx/0000@!</div>
<div class="t" style="left:170.6px;top:554.00px;font-size:10.65px;color:#000;">Pokud jste již naše pohledávky uhradili, sdělte nám, prosíme, datum a formu</div>
<div class="t" style="left:170.6px;top:570.00px;font-size:10.42px;color:#000;">úhrady. Děkujeme. [:NSIDNO: [:NS:]</div>
<div class="b" style="left:573px;top:518px;width:15px;height:66px;background:#8da2bd"></div>
<div class="b" style="left:574px;top:527px;width:13px;height:49px;background:#cfcfcf;box-sizing:border-box;border-left:1px solid #ffffff"></div>
<div class="b" style="left:573px;top:519px;width:15px;height:15px;box-sizing:border-box;border:1px solid #8196b4;border-bottom-color:#5c7799;border-radius:7px 7px 0 0;background:#d2d2d2;box-shadow:inset 1px 1px 0 #fff"></div>
<div class="b" style="left:574px;top:534px;width:13px;height:1px;background:#ffffff"></div>
<div class="b" style="left:577px;top:525px;width:0;height:0;border-left:3.5px solid transparent;border-right:3.5px solid transparent;border-bottom:4px solid #5c7799"></div>
<div class="b" style="left:573px;top:569px;width:15px;height:15px;box-sizing:border-box;border:1px solid #8196b4;border-top-color:#5c7799;border-radius:0 0 7px 7px;background:#d2d2d2;box-shadow:inset 1px 1px 0 #fff"></div>
<div class="b" style="left:577px;top:574px;width:0;height:0;border-left:3.5px solid transparent;border-right:3.5px solid transparent;border-top:4px solid #5c7799"></div>
<div class="b" style="left:582px;top:546px;width:2px;height:2px;background:#ffffff"></div>
<div class="b" style="left:583px;top:548px;width:2px;height:1px;background:#7d93b3"></div>
<div class="b" style="left:577px;top:550px;width:2px;height:2px;background:#ffffff"></div>
<div class="b" style="left:578px;top:552px;width:2px;height:1px;background:#7d93b3"></div>
<div class="b" style="left:582px;top:554px;width:2px;height:2px;background:#ffffff"></div>
<div class="b" style="left:583px;top:556px;width:2px;height:1px;background:#7d93b3"></div>
<div class="t" style="right:846.97775390625px;top:593.00px;font-size:11.39px;font-weight:bold;color:#000;text-align:right;">Datum upomínky</div>
<div class="sf" style="left:167px;top:588px;width:61px;height:17px;background:#ffffff;"></div>
<div class="t" style="left:170px;top:593.00px;font-size:11px;color:#000;">03.06.2024</div>
<div class="t" style="right:847.62448984375px;top:613.00px;font-size:11.61px;font-weight:bold;color:#000;text-align:right;">Vyřizuje</div>
<div class="sf" style="left:167px;top:610px;width:206px;height:17px;background:#ffffff;"></div>
<div class="t" style="left:170px;top:615.00px;font-size:11px;color:#000;">prijmeni2702 jmeno2702 290-9027</div>
<div class="sf" style="left:383px;top:609px;width:205px;height:18px;background:#e8e8e8;"></div>
<div class="b" style="left:617px;top:505px;width:385px;height:95px;box-sizing:border-box;border:1px solid #8ea0ba;border-radius:4px"></div>
<div class="b" style="left:635px;top:500px;width:107px;height:12px;background:#d9d9d9"></div>
<div class="t" style="left:639.0px;top:501.00px;font-size:11.43px;font-weight:bold;color:#000;">Konečný příjemce</div>
<div class="b" style="left:857px;top:495px;width:42px;height:17px;background:#d9d9d9"></div>
<div class="b" style="left:921px;top:495px;width:48px;height:17px;background:#d9d9d9"></div>
<div class="b" style="left:860px;top:497px;width:11px;height:11px;border-radius:50%;box-sizing:border-box;background:#2a3850;border:2px solid #9aaabf;box-shadow:1px 1px 0 #ffffff"></div>
<div class="t" style="left:873.5px;top:499.00px;font-size:10.5px;color:#000;">Firma</div>
<div class="b" style="left:922px;top:497px;width:11px;height:11px;border-radius:50%;box-sizing:border-box;border:1px solid;border-color:#2a3850 #ffffff #ffffff #2a3850;background:#ffffff;box-shadow:1px 1px 0 #e8e8e8"></div>
<div class="t" style="left:936.5px;top:499.00px;font-size:10.6px;color:#000;">Externi</div>
<div class="sf" style="left:626px;top:518px;width:358px;height:16px;background:#ffc0c0;"></div>
<div class="t" style="left:629px;top:522.00px;font-size:11px;color:#000;">int. název 15</div>
<div class="sf" style="left:626px;top:537px;width:358px;height:47px;background:#ebebeb;"></div>
<div class="t" style="left:629px;top:542.00px;font-size:11px;color:#000;">ulice a cp. 12762</div>
<div class="t" style="left:629px;top:557.00px;font-size:11px;color:#000;">PRAHA 2</div>
<div class="b" style="left:969px;top:538px;width:15px;height:46px;background:#8da2bd"></div>
<div class="b" style="left:970px;top:547px;width:13px;height:29px;background:#cfcfcf;box-sizing:border-box;border-left:1px solid #ffffff"></div>
<div class="b" style="left:969px;top:539px;width:15px;height:15px;box-sizing:border-box;border:1px solid #8196b4;border-bottom-color:#5c7799;border-radius:7px 7px 0 0;background:#d2d2d2;box-shadow:inset 1px 1px 0 #fff"></div>
<div class="b" style="left:970px;top:554px;width:13px;height:1px;background:#ffffff"></div>
<div class="b" style="left:973px;top:545px;width:0;height:0;border-left:3.5px solid transparent;border-right:3.5px solid transparent;border-bottom:4px solid #5c7799"></div>
<div class="b" style="left:969px;top:569px;width:15px;height:15px;box-sizing:border-box;border:1px solid #8196b4;border-top-color:#5c7799;border-radius:0 0 7px 7px;background:#d2d2d2;box-shadow:inset 1px 1px 0 #fff"></div>
<div class="b" style="left:973px;top:574px;width:0;height:0;border-left:3.5px solid transparent;border-right:3.5px solid transparent;border-top:4px solid #5c7799"></div>
<div class="b" style="left:978px;top:558px;width:2px;height:2px;background:#ffffff"></div>
<div class="b" style="left:979px;top:560px;width:2px;height:1px;background:#7d93b3"></div>
<div class="b" style="left:973px;top:562px;width:2px;height:2px;background:#ffffff"></div>
<div class="b" style="left:974px;top:564px;width:2px;height:1px;background:#7d93b3"></div>
<div class="b" style="left:619px;top:611px;width:112px;height:19px;box-sizing:border-box;border:1px solid;border-color:#ffffff #7d93b3 #7d93b3 #ffffff;border-radius:2px;background:#dadada"></div>
<div class="t" style="left:525.0px;width:300px;top:615.00px;font-size:10.6px;color:#8a9cbc;text-align:center;"><u>V</u>ytvořit upomínku</div>
<div class="b" style="left:746px;top:611px;width:121px;height:19px;box-sizing:border-box;border:1px solid;border-color:#ffffff #7d93b3 #7d93b3 #ffffff;border-radius:2px;background:#dadada"></div>
<div class="t" style="left:656.5px;width:300px;top:615.00px;font-size:10.6px;color:#000;text-align:center;">Vytisknout upomínku</div>
<div class="b" style="left:743px;top:607px;width:127px;height:28px;box-sizing:border-box;border:3px solid #ee0000;border-radius:2px"></div>
<div class="b" style="left:879px;top:611px;width:115px;height:19px;box-sizing:border-box;border:1px solid;border-color:#ffffff #7d93b3 #7d93b3 #ffffff;border-radius:2px;background:#dadada"></div>
<div class="t" style="left:786.5px;width:300px;top:615.00px;font-size:10.6px;color:#000;text-align:center;"><u>D</u>etail upomínky</div>
</body></html>
